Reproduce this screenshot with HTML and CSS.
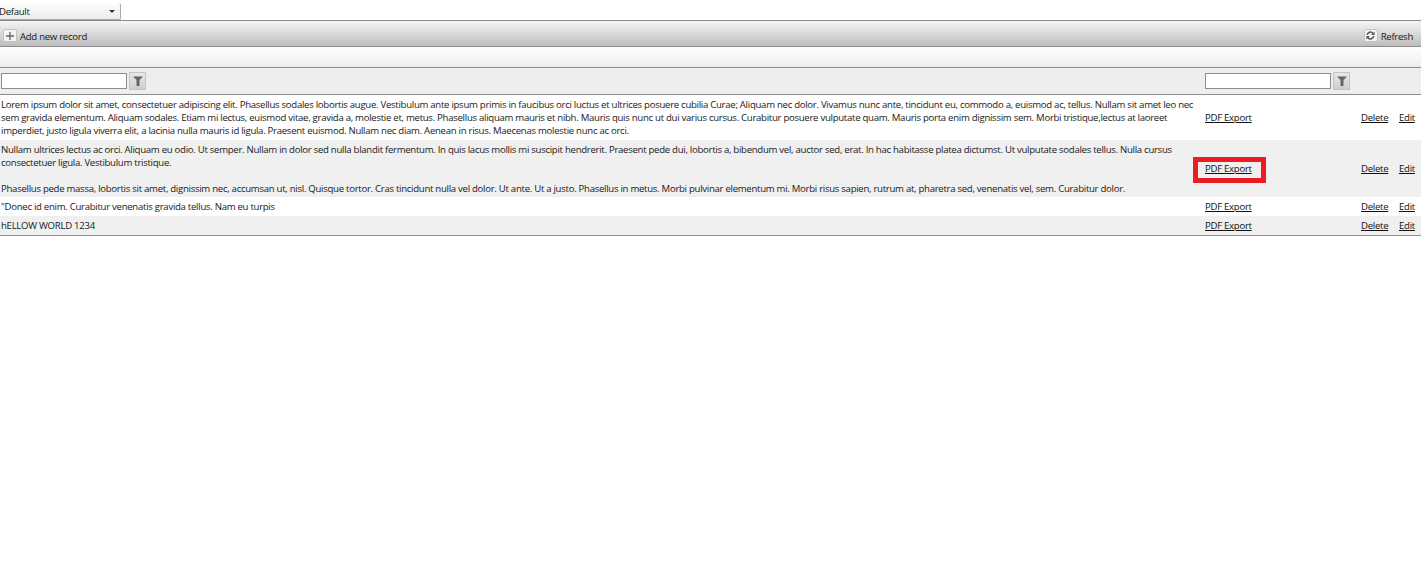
FILE: index.html
```html
<!DOCTYPE html>
<html lang="en">
<head>
  <meta charset="UTF-8">
  <title>Records</title>
  <link rel="stylesheet" href="styles.css">
</head>
<body>
  <div class="view-bar">
    <div class="view-select">
      <span>Default</span>
      <span class="caret"></span>
    </div>
  </div>

  <div class="toolbar">
    <a class="tool">
      <span class="tool-icon">
        <svg width="10" height="10" viewBox="0 0 10 10"><path d="M5 1v8M1 5h8" stroke="#666" stroke-width="1.3" fill="none"/></svg>
      </span>
      Add new record
    </a>
    <a class="tool">
      <span class="tool-icon">
        <svg width="11" height="11" viewBox="0 0 11 11"><path d="M1.5 5A4 4 0 0 1 8.6 2.8L9.6 1.5V5H6.2l1.2-1.2A2.5 2.5 0 0 0 3 5zM9.5 6A4 4 0 0 1 2.4 8.2L1.4 9.5V6h3.4L3.6 7.2A2.5 2.5 0 0 0 8 6z" fill="#555"/></svg>
      </span>
      Refresh
    </a>
  </div>

  <div class="group-band"></div>

  <table class="grid">
    <colgroup>
      <col class="col-text">
      <col class="col-pdf">
      <col class="col-delete">
      <col class="col-edit">
    </colgroup>
    <thead>
      <tr class="filter-row">
        <td>
          <div class="filter">
            <input type="text">
            <span class="filter-btn">
              <svg width="10" height="10" viewBox="0 0 10 10"><path d="M0 .5h10L6.5 4v6h-3V4z" fill="#666"/></svg>
            </span>
          </div>
        </td>
        <td colspan="3">
          <div class="filter">
            <input type="text">
            <span class="filter-btn">
              <svg width="10" height="10" viewBox="0 0 10 10"><path d="M0 .5h10L6.5 4v6h-3V4z" fill="#666"/></svg>
            </span>
          </div>
        </td>
      </tr>
    </thead>
    <tbody>
      <tr>
        <td>Lorem ipsum dolor sit amet, consectetuer adipiscing elit. Phasellus sodales lobortis augue. Vestibulum ante ipsum primis in faucibus orci luctus et ultrices posuere cubilia Curae; Aliquam nec dolor. Vivamus nunc ante, tincidunt eu, commodo a, euismod ac, tellus. Nullam sit amet leo nec<br>sem gravida elementum. Aliquam sodales. Etiam mi lectus, euismod vitae, gravida a, molestie et, metus. Phasellus aliquam mauris et nibh. Mauris quis nunc ut dui varius cursus. Curabitur posuere vulputate quam. Mauris porta enim dignissim sem. Morbi tristique,lectus at laoreet<br>imperdiet, justo ligula viverra elit, a lacinia nulla mauris id ligula. Praesent euismod. Nullam nec diam. Aenean in risus. Maecenas molestie nunc ac orci.</td>
        <td><a href="#">PDF Export</a></td>
        <td><a href="#">Delete</a></td>
        <td><a href="#">Edit</a></td>
      </tr>
      <tr class="alt tall">
        <td>Nullam ultrices lectus ac orci. Aliquam eu odio. Ut semper. Nullam in dolor sed nulla blandit fermentum. In quis lacus mollis mi suscipit hendrerit. Praesent pede dui, lobortis a, bibendum vel, auctor sed, erat. In hac habitasse platea dictumst. Ut vulputate sodales tellus. Nulla cursus<br>consectetuer ligula. Vestibulum tristique.<br><br>Phasellus pede massa, lobortis sit amet, dignissim nec, accumsan ut, nisl. Quisque tortor. Cras tincidunt nulla vel dolor. Ut ante. Ut a justo. Phasellus in metus. Morbi pulvinar elementum mi. Morbi risus sapien, rutrum at, pharetra sed, venenatis vel, sem. Curabitur dolor.</td>
        <td>
          <a href="#" class="marked">PDF Export</a>
        </td>
        <td><a href="#">Delete</a></td>
        <td><a href="#">Edit</a></td>
      </tr>
      <tr>
        <td>"Donec id enim. Curabitur venenatis gravida tellus. Nam eu turpis</td>
        <td><a href="#">PDF Export</a></td>
        <td><a href="#">Delete</a></td>
        <td><a href="#">Edit</a></td>
      </tr>
      <tr class="alt">
        <td>hELLOW WORLD 1234</td>
        <td><a href="#">PDF Export</a></td>
        <td><a href="#">Delete</a></td>
        <td><a href="#">Edit</a></td>
      </tr>
    </tbody>
  </table>
</body>
</html>
```

FILE: styles.css
```css
* {
  box-sizing: border-box;
}

body {
  margin: 0;
  font-family: 'Open Sans', sans-serif;
  font-size: 9.6px;
  letter-spacing: -0.285px;
  color: #1a1a1a;
  background: white;
  overflow: hidden;
}

.view-bar {
  height: 20px;
  padding-top: 3px;
}

.view-select {
  width: 121px;
  height: 17px;
  padding-right: 5px;
  display: flex;
  align-items: center;
  justify-content: space-between;
  background: linear-gradient(#fdfdfd, #ececec);
  border-right: 1px solid #aaa;
  border-bottom: 1px solid #aaa;
  border-radius: 0 2px 2px 0;
  text-indent: -1px;
}

.caret {
  width: 0;
  height: 0;
  border-left: 3px solid transparent;
  border-right: 3px solid transparent;
  border-top: 3px solid #333;
}

.toolbar {
  height: 27px;
  padding: 5px 8px 0 3px;
  display: flex;
  align-items: center;
  justify-content: space-between;
  border-top: 1px solid #8c8c8c;
  border-bottom: 1px solid #8c8c8c;
  background: linear-gradient(#f5f5f5, #dcdcdc 45%, #bdbdbd);
}

.tool {
  display: flex;
  align-items: center;
  gap: 3px;
}

.tool-icon {
  width: 14px;
  height: 13px;
  margin-top: -1px;
  display: flex;
  align-items: center;
  justify-content: center;
  border: 1px solid #c4c4c4;
  border-radius: 2px;
  background: #f4f4f4;
}

.group-band {
  height: 20px;
  background: linear-gradient(#fefefe, #eeeeee);
}

.grid {
  width: 100%;
  table-layout: fixed;
  border-collapse: collapse;
  border-top: 1px solid #8c8c8c;
  border-bottom: 1px solid #8c8c8c;
}

.col-pdf {
  width: 156px;
}

.col-delete {
  width: 38px;
}

.col-edit {
  width: 23px;
}

.grid td {
  padding: 3px 1px;
  line-height: 13px;
  vertical-align: middle;
  white-space: nowrap;
}

.grid .tall td {
  padding-bottom: 2px;
}

.grid .tall td + td {
  padding-bottom: 4px;
}

.grid a {
  color: #111;
  text-decoration: underline;
}

.filter-row {
  height: 27px;
  background: #eeeeee;
  border-bottom: 1px solid #8c8c8c;
}

.grid .filter-row td {
  padding: 0 1px 1px;
}

.filter {
  display: flex;
  align-items: center;
  gap: 2px;
}

.filter input {
  width: 126px;
  height: 16px;
  padding: 0;
  border: 1px solid #8c8c8c;
  background: white;
}

.filter-btn {
  width: 17px;
  height: 18px;
  display: flex;
  align-items: center;
  justify-content: center;
  border: 1px solid #c4c4c4;
  background: linear-gradient(#e8e8e8, #cfcfcf);
}

.alt {
  background: #f0f0f0;
}

.marked {
  position: relative;
}

.marked::after {
  content: "";
  position: absolute;
  left: -12px;
  right: -14px;
  top: -5px;
  bottom: -8px;
  border: 5px solid #ed1c24;
}
```
